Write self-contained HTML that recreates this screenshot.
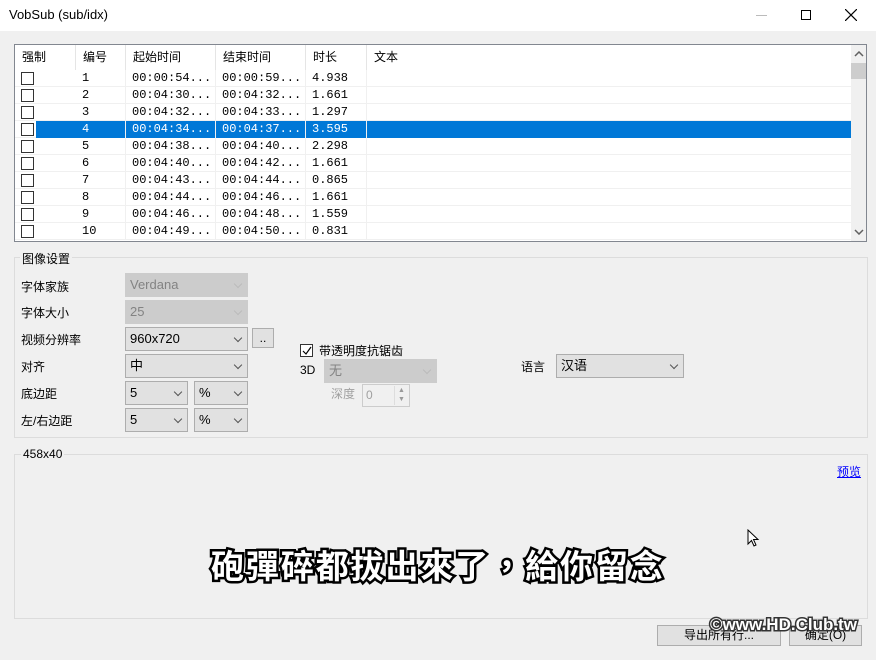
<!DOCTYPE html>
<html><head><meta charset="utf-8"><style>
*{margin:0;padding:0;box-sizing:border-box}
body{width:876px;height:660px;background:#f0f0f0;position:relative;overflow:hidden;font-family:"Liberation Sans","Noto Sans CJK SC",sans-serif;font-size:12px;color:#000}
.a{position:absolute;white-space:nowrap}
.title{left:0;top:0;width:876px;height:31px;background:#fff}
.list{left:14px;top:44px;width:853px;height:198px;background:#fff;border:1px solid #828790;overflow:hidden}
.hd{position:absolute;top:0;height:25px;line-height:25px;padding-left:7px;border-right:1px solid #e5e5e5}
.row{position:absolute;left:0;width:836px;height:17px;border-bottom:1px solid #f0f0f0}
.c{position:absolute;top:0;height:17px;line-height:17px;padding-left:6px;font-family:"Liberation Mono","Noto Sans CJK SC",monospace;font-size:12px;border-right:1px solid #f0f0f0}
.cb{position:absolute;left:6px;top:2px;width:13px;height:13px;border:1px solid #333;background:#fff}
.sel .c{background:#0078d7;color:#fff}
.grp{border:1px solid #dcdcdc}
.lbl{background:#f0f0f0;padding:0 2px}
.cmb{position:absolute;border:1px solid #adadad;background:#e1e1e1;height:24px;line-height:22px;padding-left:4px;font-size:13px}
.cmb.dis{background:#ccc;border-color:#ccc;color:#838383}
.cmb::after{content:"";position:absolute;right:6px;top:7px;width:5px;height:5px;border-right:1px solid #555;border-bottom:1px solid #555;transform:rotate(45deg)}
.cmb.dis::after{border-color:#bbb}
.btn{position:absolute;border:1px solid #adadad;background:#e1e1e1;text-align:center;font-size:12px}
.sub{left:211px;top:542px;font-size:33px;font-weight:bold;letter-spacing:1.9px;color:#fff;-webkit-text-stroke:5px #000;paint-order:stroke fill;font-family:"Noto Sans CJK TC",sans-serif;line-height:44px}
</style></head><body>
<div class="a title"></div>
<div class="a" style="left:9px;top:7px;font-size:13px">VobSub (sub/idx)</div>
<div class="a" style="left:756px;top:15px;width:11px;height:1px;background:#bbb"></div>
<div class="a" style="left:801px;top:10px;width:10px;height:10px;border:1px solid #000"></div>
<svg class="a" style="left:845px;top:9px" width="12" height="12"><path d="M0 0L12 12M12 0L0 12" stroke="#000" stroke-width="1.2"/></svg>

<div class="a list">
  <div class="hd" style="left:0;width:61px">强制</div>
  <div class="hd" style="left:61px;width:50px">编号</div>
  <div class="hd" style="left:111px;width:90px">起始时间</div>
  <div class="hd" style="left:201px;width:90px">结束时间</div>
  <div class="hd" style="left:291px;width:61px">时长</div>
  <div class="hd" style="left:352px;width:484px;border:none">文本</div>
  <div style="position:absolute;left:836px;top:0;width:16px;height:196px;background:#f0f0f0"></div>
  <div style="position:absolute;left:836px;top:18px;width:16px;height:16px;background:#cdcdcd"></div>
  <svg style="position:absolute;left:839px;top:6px" width="10" height="6"><path d="M1 5L5 1L9 5" stroke="#606060" stroke-width="1.5" fill="none"/></svg>
  <svg style="position:absolute;left:839px;top:184px" width="10" height="6"><path d="M1 1L5 5L9 1" stroke="#606060" stroke-width="1.5" fill="none"/></svg>
  <div id="rows"></div>
</div>

<div class="a grp" style="left:14px;top:257px;width:854px;height:181px"></div>
<div class="a lbl" style="left:20px;top:250px">图像设置</div>
<div class="a" style="left:21px;top:278px">字体家族</div>
<div class="a" style="left:21px;top:304px">字体大小</div>
<div class="a" style="left:21px;top:331px">视频分辨率</div>
<div class="a" style="left:21px;top:358px">对齐</div>
<div class="a" style="left:21px;top:385px">底边距</div>
<div class="a" style="left:21px;top:412px">左/右边距</div>
<div class="cmb dis" style="left:125px;top:273px;width:123px">Verdana</div>
<div class="cmb dis" style="left:125px;top:300px;width:123px">25</div>
<div class="cmb" style="left:125px;top:327px;width:123px">960x720</div>
<div class="btn" style="left:252px;top:328px;width:22px;height:20px;line-height:18px">..</div>
<div class="cmb" style="left:125px;top:354px;width:123px">中</div>
<div class="cmb" style="left:125px;top:381px;width:63px">5</div>
<div class="cmb" style="left:194px;top:381px;width:54px">%</div>
<div class="cmb" style="left:125px;top:408px;width:63px">5</div>
<div class="cmb" style="left:194px;top:408px;width:54px">%</div>
<div class="a" style="left:300px;top:344px;width:13px;height:13px;border:1px solid #333;background:#fff"></div>
<svg class="a" style="left:302px;top:346px" width="10" height="10"><path d="M1 5L4 8L9 1" stroke="#000" stroke-width="1.2" fill="none"/></svg>
<div class="a" style="left:319px;top:342px">带透明度抗锯齿</div>
<div class="a" style="left:300px;top:363px">3D</div>
<div class="cmb dis" style="left:324px;top:359px;width:113px">无</div>
<div class="a" style="left:331px;top:385px;color:#a0a0a0">深度</div>
<div class="a" style="left:362px;top:384px;width:48px;height:23px;border:1px solid #ccc;background:#f0f0f0;padding-left:3px;line-height:21px;color:#a0a0a0">0</div>
<div class="a" style="left:394px;top:386px;width:14px;height:19px;border-left:1px solid #ddd;color:#999;font-size:7px;line-height:9px;text-align:center">▲<br>▼</div>
<div class="a" style="left:521px;top:358px">语言</div>
<div class="cmb" style="left:556px;top:354px;width:128px">汉语</div>

<div class="a grp" style="left:14px;top:454px;width:854px;height:165px"></div>
<div class="a lbl" style="left:21px;top:447px">458x40</div>
<div class="a" style="left:837px;top:463px;color:#00f;text-decoration:underline">预览</div>
<div class="a sub">砲彈碎都拔出來了，給你留念</div>
<svg class="a" style="left:747px;top:529px" width="14" height="20"><path d="M1 1L1 15L4.5 11.5L7 17L9 16L6.5 10.5L11 10.5Z" fill="#fff" stroke="#000" stroke-width="1"/></svg>
<div class="btn" style="left:657px;top:625px;width:124px;height:21px;line-height:19px">导出所有行...</div>
<div class="btn" style="left:789px;top:625px;width:73px;height:21px;line-height:19px">确定(O)</div>
<div class="a" style="left:710px;top:615px;font-size:17px;font-weight:bold;color:#fff;-webkit-text-stroke:3px #333;paint-order:stroke fill">©www.HD.Club.tw</div>

<script>
var d=[["1","00:00:54...","00:00:59...","4.938"],["2","00:04:30...","00:04:32...","1.661"],["3","00:04:32...","00:04:33...","1.297"],["4","00:04:34...","00:04:37...","3.595"],["5","00:04:38...","00:04:40...","2.298"],["6","00:04:40...","00:04:42...","1.661"],["7","00:04:43...","00:04:44...","0.865"],["8","00:04:44...","00:04:46...","1.661"],["9","00:04:46...","00:04:48...","1.559"],["10","00:04:49...","00:04:50...","0.831"]];
var h="";
d.forEach(function(r,i){
 h+='<div class="row'+(i==3?' sel':'')+'" style="top:'+(25+i*17)+'px"><div class="cb"></div>'+
 (i==3?'<div class="c" style="left:21px;width:40px;border:none"></div>':'')+
 '<div class="c" style="left:61px;width:50px">'+r[0]+'</div><div class="c" style="left:111px;width:90px">'+r[1]+'</div><div class="c" style="left:201px;width:90px">'+r[2]+'</div><div class="c" style="left:291px;width:61px">'+r[3]+'</div><div class="c" style="left:352px;width:484px;border:none"></div></div>';
});
document.getElementById("rows").innerHTML=h;
</script>
</body></html>
